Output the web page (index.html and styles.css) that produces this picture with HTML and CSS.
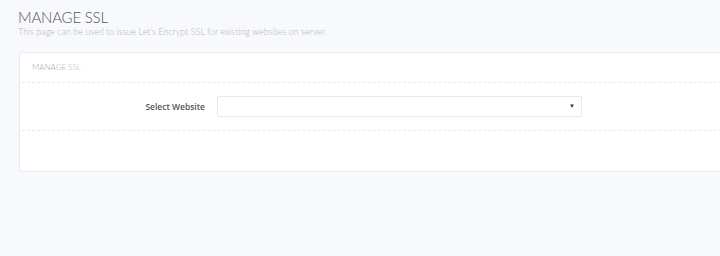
FILE: index.html
```html
<!DOCTYPE html>
<html lang="en">
<head>
  <meta charset="UTF-8" />
  <title>Manage SSL</title>
  <link rel="stylesheet" href="styles.css">
</head>
<body>
  <div class="page-head">
    <h2>MANAGE SSL</h2>
    <p>This page can be used to issue Let’s Encrypt SSL for existing websites on server.</p>
  </div>

  <div class="panel">
    <div class="panel-title">MANAGE SSL</div>
    <form class="panel-body">
      <label for="website">Select Website</label>
      <div class="select-wrap">
        <select id="website"></select>
      </div>
    </form>
    <div class="panel-foot"></div>
  </div>
</body>
</html>
```

FILE: styles.css
```css
body {
  margin: 0;
  padding: 10px 0 0 18px;
  background: #f8f9fc;
  font-family: Lato, "Open Sans", sans-serif;
  overflow: hidden;
}

.page-head h2 {
  margin: 0;
  font-size: 15px;
  font-weight: 300;
  color: #555;
  line-height: 14px;
  letter-spacing: -0.2px;
}

.page-head p {
  margin: 3px 0 0;
  font-size: 9px;
  font-weight: 300;
  color: #b5b5b5;
  line-height: 10px;
}

.panel {
  margin: 15px -40px 0 1px;
  background: #fff;
  border: 1px solid #e6ebf4;
  border-radius: 3px;
  box-shadow: 0 1px 1px rgba(200, 210, 230, 0.4);
}

.panel-title {
  margin: 0 2px;
  height: 29px;
  line-height: 29px;
  padding-left: 10px;
  font-size: 8px;
  font-weight: 300;
  color: #aaa;
  border-bottom: 1px dashed #e8e8ee;
}

.panel-body {
  margin: 0 2px;
  height: 47px;
  display: flex;
  align-items: center;
  border-bottom: 1px dashed #e8e8ee;
}

.panel-body label {
  width: 195px;
  padding-right: 12px;
  text-align: right;
  font-family: "Open Sans", sans-serif;
  font-size: 8.5px;
  font-weight: 600;
  color: #555;
  box-sizing: border-box;
}

.select-wrap {
  position: relative;
}

.select-wrap select {
  appearance: none;
  width: 365px;
  height: 21px;
  margin: 0;
  border: 1px solid #e4e8f2;
  border-radius: 2px;
  background: #fff;
  display: block;
}

.select-wrap::after {
  content: "▼";
  position: absolute;
  right: 7px;
  top: 6px;
  font-size: 6px;
  color: #333;
  pointer-events: none;
}

.panel-foot {
  height: 40px;
}
```
